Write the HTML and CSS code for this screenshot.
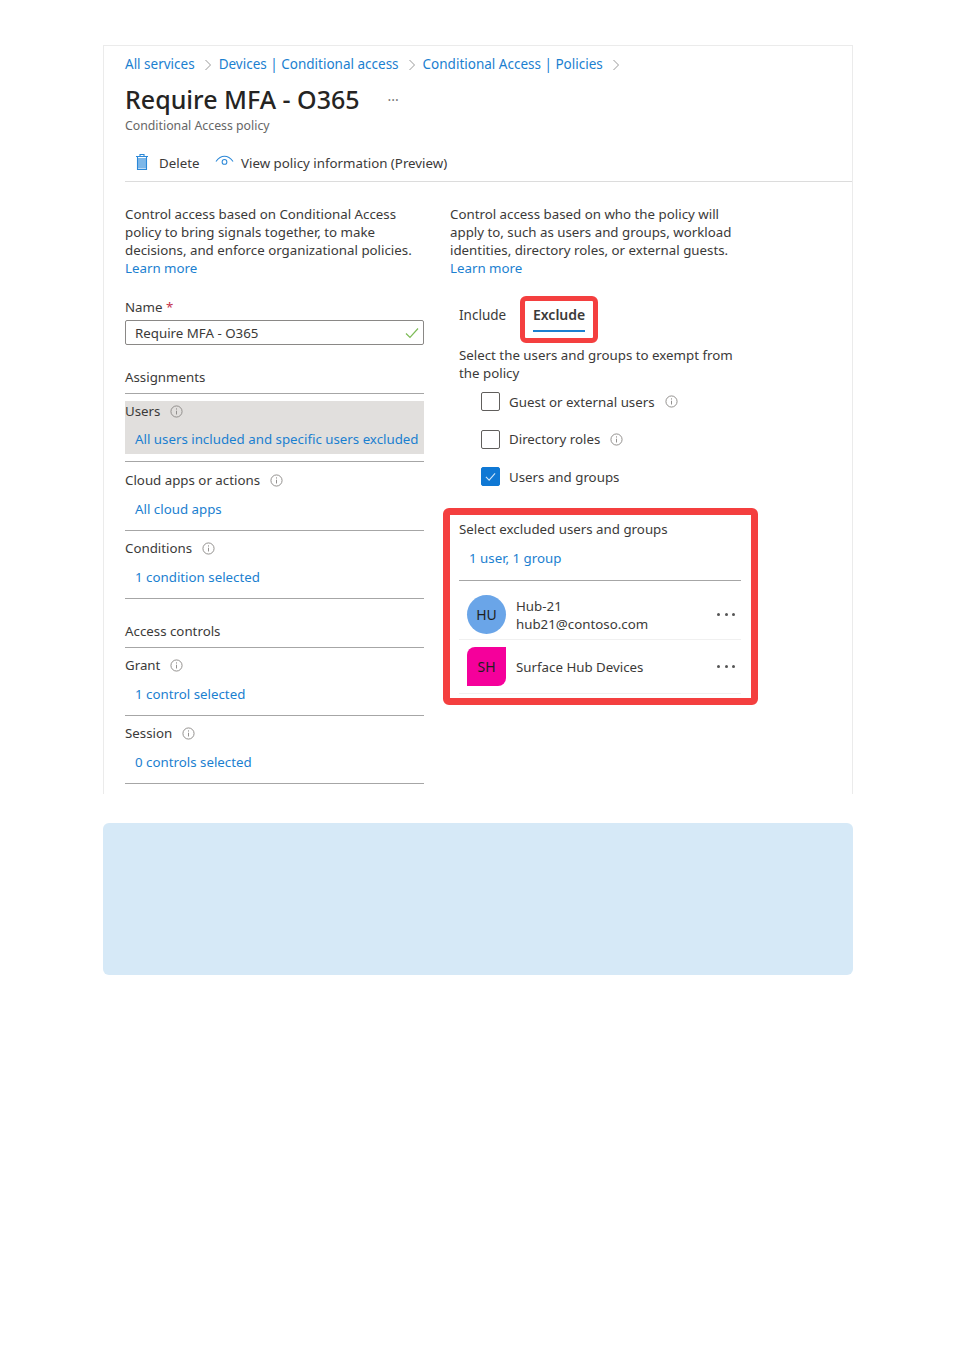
FILE: index.html
```html
<!DOCTYPE html>
<html lang="en">
<head>
<meta charset="utf-8">
<title>Require MFA - O365</title>
<link rel="stylesheet" href="styles.css">
</head>
<body>
<main class="page">
  <section class="card">
    <nav class="crumbs">
      <a>All services</a><svg class="chev" viewBox="0 0 8 12"><path d="M1.5 1l5 5-5 5"/></svg>
      <a>Devices | Conditional access</a><svg class="chev" viewBox="0 0 8 12"><path d="M1.5 1l5 5-5 5"/></svg>
      <a>Conditional Access | Policies</a><svg class="chev" viewBox="0 0 8 12"><path d="M1.5 1l5 5-5 5"/></svg>
    </nav>
    <div class="title-row"><h1>Require MFA - O365</h1><span class="title-more">···</span></div>
    <p class="subtitle">Conditional Access policy</p>
    <div class="toolbar">
      <button class="tool tool-del">
        <svg class="ico-del" viewBox="0 0 14 18"><path class="f" d="M3 5h8v10.5H3z"/><path class="s" d="M1 3.5h12M5 3.500V1.500h4v2M2.500 3.500v13h9v-13"/></svg>
        <span>Delete</span>
      </button>
      <button class="tool tool-view">
        <svg class="ico-eye" viewBox="0 0 20 12"><path class="s" d="M1 6.500C4 2.500 7 1 10 1s6 1.500 9 5.500"/><circle class="s" cx="10" cy="7" r="2.500"/></svg>
        <span>View policy information (Preview)</span>
      </button>
    </div>

    <div class="cols">
      <div class="col-left">
        <p class="desc">Control access based on Conditional Access policy to bring signals together, to make decisions, and enforce organizational policies.<br><a>Learn more</a></p>
        <label class="name-label">Name <span class="req">*</span></label>
        <div class="input">
          <span>Require MFA - O365</span>
          <svg class="ok" viewBox="0 0 14 12"><path d="M1 6.500l4 4L13 1.500"/></svg>
        </div>
        <h2 class="group">Assignments</h2>
        <div class="row row-active">
          <div class="row-label">Users <svg class="info" viewBox="0 0 14 14"><circle cx="7" cy="7" r="6"/><path d="M7 6.200v4M7 3.600v1.300"/></svg></div>
          <a class="row-link">All users included and specific users excluded</a>
        </div>
        <div class="row row-tall">
          <div class="row-label">Cloud apps or actions <svg class="info" viewBox="0 0 14 14"><circle cx="7" cy="7" r="6"/><path d="M7 6.200v4M7 3.600v1.300"/></svg></div>
          <a class="row-link">All cloud apps</a>
        </div>
        <div class="row">
          <div class="row-label">Conditions <svg class="info" viewBox="0 0 14 14"><circle cx="7" cy="7" r="6"/><path d="M7 6.200v4M7 3.600v1.300"/></svg></div>
          <a class="row-link">1 condition selected</a>
        </div>
        <h2 class="group">Access controls</h2>
        <div class="row">
          <div class="row-label">Grant <svg class="info" viewBox="0 0 14 14"><circle cx="7" cy="7" r="6"/><path d="M7 6.200v4M7 3.600v1.300"/></svg></div>
          <a class="row-link">1 control selected</a>
        </div>
        <div class="row">
          <div class="row-label">Session <svg class="info" viewBox="0 0 14 14"><circle cx="7" cy="7" r="6"/><path d="M7 6.200v4M7 3.600v1.300"/></svg></div>
          <a class="row-link">0 controls selected</a>
        </div>
      </div>

      <div class="col-right">
        <p class="desc desc-right">Control access based on who the policy will apply to, such as users and groups, workload identities, directory roles, or external guests.<br><a>Learn more</a></p>
        <div class="tabs">
          <span class="tab">Include</span>
          <span class="tab-mark"><span class="tab-on">Exclude</span></span>
        </div>
        <p class="exempt">Select the users and groups to exempt from the policy</p>
        <ul class="checks">
          <li><span class="box"></span>Guest or external users <svg class="info" viewBox="0 0 14 14"><circle cx="7" cy="7" r="6"/><path d="M7 6.200v4M7 3.600v1.300"/></svg></li>
          <li><span class="box"></span>Directory roles <svg class="info" viewBox="0 0 14 14"><circle cx="7" cy="7" r="6"/><path d="M7 6.200v4M7 3.600v1.300"/></svg></li>
          <li><span class="box box-on"><svg viewBox="0 0 14 12"><path d="M2 6.500l3.500 3.500L12 2.500"/></svg></span>Users and groups</li>
        </ul>
        <div class="excluded">
          <div class="ex-title">Select excluded users and groups</div>
          <a class="ex-link">1 user, 1 group</a>
          <div class="person person-first">
            <span class="avatar avatar-hu">HU</span>
            <div class="who"><div>Hub-21</div><div>hub21@contoso.com</div></div>
            <span class="dots"><i></i><i></i><i></i></span>
          </div>
          <div class="person person-second">
            <span class="avatar avatar-sh">SH</span>
            <div class="who"><div>Surface Hub Devices</div></div>
            <span class="dots"><i></i><i></i><i></i></span>
          </div>
        </div>
      </div>
    </div>
  </section>
  <div class="note"></div>
</main>
</body>
</html>
```

FILE: styles.css
```css
* { box-sizing: border-box; }
html, body { margin: 0; padding: 0; background: #fff; }
body {
  font-family: "Noto Sans", "Open Sans", sans-serif;
  font-size: 13.3px;
  line-height: 18px;
  color: #3b3a39;
}
a { color: #1b80d0; }
p, h1, h2, ul { margin: 0; padding: 0; font: inherit; }
.page { width: 750px; margin-left: 103px; padding-top: 45px; }

.card {
  height: 749px;
  border: 1px solid #ebebeb;
  border-bottom: 0;
  padding-left: 21px;
}

.crumbs { display: flex; align-items: center; height: 18px; margin-top: 9px; font-size: 13.5px; }
.chev { width: 8px; height: 12px; margin: 1px 7px 0 9px; fill: none; stroke: #9a9a9a; stroke-width: 1; }
.crumbs .chev:last-child { margin-right: 0; }

.title-row { display: flex; align-items: center; margin-top: 7px; height: 38px; }
h1 { font-size: 25px; line-height: 34px; font-weight: 500; color: #252423; }
.title-more { margin: 2px 0 0 28px; font-size: 14px; color: #777; }
.subtitle { margin-top: 0; font-size: 12.3px; line-height: 16px; color: #666; }

.toolbar {
  display: flex;
  align-items: center;
  height: 37px;
  margin-top: 11px;
  border-bottom: 1px solid #dcdcdc;
  padding: 0 0 1px 10px;
}
.tool { display: flex; align-items: center; padding: 0; border: 0; background: none; font: inherit; color: #3b3a39; }
.tool-del { width: 80px; gap: 10px; }
.tool-view { gap: 7px; }
.ico-del { width: 14px; height: 18px; margin-top: -2px; }
.ico-eye { width: 19px; height: 12px; margin-top: -3px; }
.s { fill: none; stroke: #2b88d8; stroke-width: 1.1; }
.f { fill: #7db7e8; }

.cols { display: grid; grid-template-columns: 299px 290px; column-gap: 26px; padding-top: 23px; }

.desc { width: 298px; }
.desc-right { width: 290px; }
.name-label { display: block; margin-top: 21px; }
.req { color: #c4314b; }
.input {
  display: flex;
  align-items: center;
  justify-content: space-between;
  height: 25px;
  margin-top: 4px;
  padding: 0 4px 0 9px;
  border: 1px solid #8a8886;
  border-radius: 2px;
}
.ok { width: 14px; height: 12px; fill: none; stroke: #7dbb57; stroke-width: 1.2; }

.group { margin-top: 23px; height: 26px; border-bottom: 1px solid #a6a6a6; }

.row { height: 68px; padding-top: 8px; border-bottom: 1px solid #a6a6a6; }
.row-tall { height: 69px; padding-top: 9px; }
.row-active { height: 68px; padding-top: 7px; }
.row-active .row-label, .row-active .row-link { background: #e1dfdd; }
.row-active .row-label { height: 20px; }
.row-active .row-link { height: 33px; padding-top: 9px; margin-top: 0; }
.row-label { display: flex; align-items: center; }
.row-link { display: block; margin-top: 11px; padding-left: 10px; }
.info { width: 13px; height: 13px; margin-left: 10px; fill: none; stroke: #8a8886; stroke-width: 1; }

.tabs { display: flex; align-items: flex-start; margin: 19px 0 0 9px; height: 47px; }
.tab { width: 61px; font-size: 13.5px; margin-top: 10px; }
.tab-mark {
  width: 78px;
  height: 47px;
  border: 5px solid #f43f3f;
  border-radius: 6px;
  padding: 5px 0 0 8px;
}
.tab-on {
  display: block;
  width: 52px;
  height: 26px;
  font-size: 14px;
  font-weight: 600;
  border-bottom: 2px solid #1b80d0;
}
.exempt { margin: 3px 0 0 9px; width: 285px; }
.checks { list-style: none; margin: 10px 0 0 31px; }
.checks li { display: flex; align-items: center; height: 19px; margin-bottom: 18.500px; }
.checks li:last-child { margin-bottom: 0; }
.box { width: 19px; height: 19px; margin-right: 9px; border: 1px solid #605e5c; border-radius: 2px; }
.box-on { display: flex; align-items: center; justify-content: center; background: #0f78d4; border-color: #0f78d4; }
.box-on svg { width: 13px; height: 11px; fill: none; stroke: #cfe6fa; stroke-width: 1.2; }

.excluded {
  width: 315px;
  height: 197px;
  margin: 21.500px 0 0 -7px;
  padding: 5px 10px 0 9px;
  border: 7px solid #f43f3f;
  border-radius: 6px;
}
.ex-link { display: block; margin: 11px 0 0 10px; height: 31px; }
.person { display: flex; align-items: center; padding-left: 8px; border-bottom: 1px solid #f0f0f0; }
.person-first { height: 60px; padding-top: 10px; border-top: 1px solid #a6a6a6; }
.person-second { height: 54px; padding-top: 1px; }
.avatar { display: flex; align-items: center; justify-content: center; width: 39px; height: 39px; font-size: 14px; color: #1f1f1f; }
.avatar-hu { background: #6aa5e8; border-radius: 50%; }
.avatar-sh { background: #f5009b; border-radius: 8px 0 8px 0; }
.who { flex: 1; margin-left: 10px; }
.dots { display: flex; gap: 4.500px; margin-right: 6px; }
.dots i { width: 3px; height: 3px; border-radius: 50%; background: #555; }

.note { height: 152px; margin-top: 29px; background: #d6e9f7; border-radius: 6px; }
```
